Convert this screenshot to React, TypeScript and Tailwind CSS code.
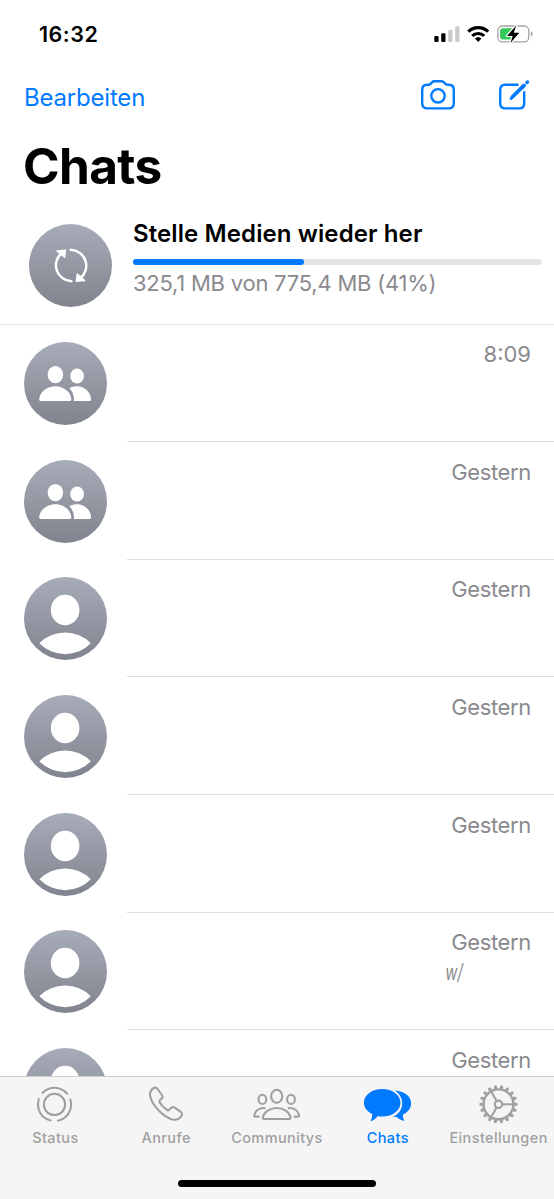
import React from 'react';

type ChatKind = 'group' | 'person';

type Chat = {
  id: number;
  kind: ChatKind;
  time: string;
  preview?: string;
};

const CHATS: Chat[] = [
  { id: 1, kind: 'group', time: '8:09' },
  { id: 2, kind: 'group', time: 'Gestern' },
  { id: 3, kind: 'person', time: 'Gestern' },
  { id: 4, kind: 'person', time: 'Gestern' },
  { id: 5, kind: 'person', time: 'Gestern' },
  { id: 6, kind: 'person', time: 'Gestern', preview: 'w/' },
  { id: 7, kind: 'person', time: 'Gestern' },
];

// --- Status bar ---

const StatusIcons: React.FC = () => (
  <svg width="104" height="28" viewBox="0 0 104 28" fill="none">
    <rect x="4.3" y="16" width="4.3" height="6" rx="1.2" fill="#000" />
    <rect x="11.2" y="13.2" width="4.3" height="8.8" rx="1.2" fill="#000" />
    <rect x="18.2" y="9.8" width="4.3" height="12.2" rx="1.2" fill="#cacaca" />
    <rect x="25.2" y="6.2" width="4.3" height="15.8" rx="1.2" fill="#cacaca" />
    <path d="M38.3 11.7a14.3 14.3 0 0 1 19.8 0" stroke="#000" strokeWidth="3.2" />
    <path d="M42.2 15.9a8.6 8.6 0 0 1 12 0" stroke="#000" strokeWidth="3" />
    <path d="M48.2 21.9l-3.3-3.4a4.8 4.8 0 0 1 6.6 0z" fill="#000" />
    <rect x="67.8" y="6" width="31" height="15.8" rx="4.6" stroke="#a2a2a2" strokeWidth="1.3" />
    <path d="M100.8 11.3c2.4.8 2.4 4.4 0 5.2z" fill="#a2a2a2" />
    <rect x="70.1" y="8.3" width="14" height="11.2" rx="2.4" fill="#34c759" />
    <path
      d="M86.3 5.6L77 15.9h5.7l-2.3 7L89.4 12.7h-5.7z"
      fill="#000"
      stroke="#fff"
      strokeWidth="2.4"
      strokeLinejoin="round"
      paintOrder="stroke"
    />
  </svg>
);

// --- Navigation icons ---

const CameraIcon: React.FC = () => (
  <svg width="46" height="40" viewBox="0 0 46 40" fill="none" stroke="#007aff" strokeWidth="2.4">
    <path d="M12.3 9.7h1.1c1.2 0 2-.5 2.7-1.3l.9-1c.7-.8 1.4-1.1 2.5-1.1h7c1.1 0 1.8.3 2.5 1.1l.9 1c.7.8 1.5 1.3 2.7 1.3h1.1c3.4 0 5.1 1.8 5.1 5.2v13.3c0 3.4-1.8 5.2-5.2 5.2H12.4c-3.4 0-5.2-1.8-5.2-5.2V14.9c0-3.4 1.7-5.2 5.1-5.2z" />
    <circle cx="23" cy="20.8" r="6.7" />
  </svg>
);

const ComposeIcon: React.FC = () => (
  <svg width="40" height="40" viewBox="0 0 40 40" fill="none" stroke="#007aff" strokeWidth="2.4">
    <path d="M23.5 9.8H10.1c-3.2 0-4.9 1.7-4.9 4.9v13.8c0 3.2 1.7 4.9 4.9 4.9h14.2c3.2 0 4.9-1.7 4.9-4.9V16.2" />
    <path d="M28.2 8.4l2.7 2.7-12.2 11.7-3.7 1.8 1.3-4z" fill="#007aff" stroke="none" />
    <path d="M16.2 23.3l13.3-12.9" strokeWidth="3.1" strokeLinecap="round" />
    <path d="M32 7.5l.5-.5" strokeWidth="3.5" strokeLinecap="round" />
  </svg>
);

// --- Avatars ---

const AVATAR = 'flex size-[83px] shrink-0 rounded-full bg-linear-to-b from-[#a7acb9] to-[#80848e]';

const SyncGlyph: React.FC = () => (
  <svg width="83" height="83" viewBox="-0.4 0 83 83" fill="none">
    <path d="M42 57.3A16 16 0 0 1 32.6 28.8" stroke="#fff" strokeWidth="2.5" strokeLinecap="round" />
    <path d="M41.3 25.7A16 16 0 0 1 50.6 54.4" stroke="#fff" strokeWidth="2.5" strokeLinecap="round" />
    <path d="M27.6 26.9l8.4-.8-.7 7.2z" fill="#fff" stroke="#fff" strokeWidth="1.4" strokeLinejoin="round" />
    <path d="M55.2 56.6l-8.3.7 1-7.3z" fill="#fff" stroke="#fff" strokeWidth="1.4" strokeLinejoin="round" />
  </svg>
);

const PersonGlyph: React.FC = () => (
  <svg width="83" height="83" viewBox="0.4 0 83 83" fill="#fff">
    <ellipse cx="41.5" cy="33" rx="14.3" ry="15.3" />
    <path d="M15.8 66.2a36.4 36.4 0 0 1 51.4 0a35.5 35.5 0 0 1-51.4 0z" />
  </svg>
);

const GroupGlyph: React.FC = () => (
  <svg width="83" height="83" viewBox="0.4 0 83 83" fill="#fff">
    <ellipse cx="31.8" cy="32.6" rx="7.8" ry="8.6" />
    <ellipse cx="53.5" cy="34" rx="6.9" ry="7.5" />
    <path d="M17.4 59c-1.3 0-1.9-.8-1.8-2.1C16.3 49.9 23.4 44.2 31.7 44.2S47 49.9 47.7 56.9c.1 1.3-.5 2.1-1.8 2.1z" />
    <path d="M45.9 45.9c2.2-1.1 4.8-1.7 7.6-1.7 7.3 0 13.3 5.6 14 12.7.1 1.3-.5 2.1-1.7 2.1H49.9c.5-.7.6-1.5.5-2.5-.3-4.1-1.9-7-4.5-10.6z" />
  </svg>
);

const ChatRow: React.FC<{ chat: Chat }> = ({ chat }) => (
  <div className="flex h-[117.65px] shrink-0 pl-[23.6px]">
    <div className="mt-[17.7px] h-[83px]">
      <div className={AVATAR}>{chat.kind === 'group' ? <GroupGlyph /> : <PersonGlyph />}</div>
    </div>
    <div className="ml-[20.4px] flex flex-1 flex-col items-end border-b border-[#dedede] pt-[14.7px] pr-[23px] text-[22px] leading-[30px] text-[#8a8a8e]">
      <span className={chat.time === 'Gestern' ? 'tracking-[-0.35px]' : ''}>{chat.time}</span>
      {chat.preview && (
        <span className="mr-[68px] origin-right scale-x-[0.68] italic">{chat.preview}</span>
      )}
    </div>
  </div>
);

// --- Tab bar ---

const StatusTabIcon: React.FC = () => (
  <svg width="60" height="48" viewBox="0 0 60 48" fill="none" stroke="currentColor" strokeWidth="2.1">
    <circle cx="29.5" cy="24.4" r="10.6" />
    <circle
      cx="29.5"
      cy="24.4"
      r="16.6"
      strokeDasharray="27.37 7.4"
      strokeLinecap="round"
      transform="rotate(-17.2 29.5 24.4)"
    />
  </svg>
);

const CallsTabIcon: React.FC = () => (
  <svg width="60" height="48" viewBox="0 0 60 48" fill="none" stroke="currentColor" strokeWidth="2.1">
    <path d="M15.7 9.7c2.1-2.4 4.4-2.8 5.9-.7l4.3 6c1 1.5.9 2.6-.4 3.8l-1.6 1.5c-.7.6-.8 1.3-.3 2.1 1.9 3.1 4.5 5.7 7.6 7.6.8.5 1.5.4 2.1-.3l1.5-1.6c1.2-1.3 2.3-1.4 3.8-.4l6.1 4.2c2.1 1.5 1.7 3.8-.7 5.9-4.2 4-12 1.8-20.2-6.2-8.6-8.5-12.1-17.4-8.1-21.9z" />
  </svg>
);

const CommunitiesTabIcon: React.FC = () => (
  <svg width="60" height="48" viewBox="0 0 60 48" fill="none" stroke="currentColor" strokeWidth="2.1">
    <ellipse cx="29.7" cy="16.3" rx="5.6" ry="6.5" />
    <ellipse cx="15.4" cy="19.4" rx="3.9" ry="4.6" />
    <ellipse cx="44" cy="19.4" rx="3.9" ry="4.6" />
    <path d="M17.5 39c-1.2 0-1.8-.7-1.6-1.9 1.1-5.2 7-9.1 13.8-9.1s12.7 3.9 13.8 9.1c.2 1.2-.4 1.9-1.6 1.9z" />
    <path d="M18.6 28.2c-6.2-.9-10 2.5-11.3 7-.2 1 .2 1.4 1 1.4h4.3" />
    <path d="M40.8 28.2c6.2-.9 10 2.5 11.3 7 .2 1-.2 1.4-1 1.4h-4.3" />
  </svg>
);

const ChatsTabIcon: React.FC = () => (
  <svg width="60" height="48" viewBox="0.4 0 60 48" fill="currentColor">
    <path d="M24.6 9C34.8 9 42.9 15 42.9 22.8S34.8 36.6 24.6 36.6c-1.6 0-3.1-.1-4.5-.5-1.7 2.3-3.7 4.1-6.4 5-.7.2-.9-.3-.5-.8 1.1-1.7 1.5-4 1.3-6.3C9.4 31.5 6.3 27.4 6.3 22.8 6.3 15 14.4 9 24.6 9z" />
    <path d="M37.2 10.6C46.8 11.1 53.5 16.3 53.5 23.2c0 5-3.2 9.1-8.2 11.3-.2 2 .2 3.9 1.2 5.4.4.6.1 1-.5.8-3-.7-5.3-2-7.2-4-1.2.3-2.3.4-3.5.4 6.1-3.1 9.5-8.2 9.3-14.3-.2-5-3.1-9.4-7.4-12.2z" />
  </svg>
);

const GEAR_TEETH = Array.from({ length: 18 }, (_, i) => i * 20);

const SettingsTabIcon: React.FC = () => (
  <svg width="60" height="48" viewBox="0 0 60 48" fill="none" stroke="currentColor" strokeWidth="2.1">
    <g transform="translate(29.5 24.3)">
      <circle r="14.9" strokeWidth="2.4" />
      <circle r="3.7" />
      {[0, 120, 240].map((a) => (
        <path key={a} d="M4 0H15" transform={`rotate(${a})`} />
      ))}
      {GEAR_TEETH.map((a) => (
        <path key={a} d="M15.7 -2L19.1 -1.1V1.1L15.7 2z" fill="currentColor" stroke="none" transform={`rotate(${a})`} />
      ))}
    </g>
  </svg>
);

type Tab = { id: string; label: string; icon: React.ReactNode };

const TABS: Tab[] = [
  { id: 'status', label: 'Status', icon: <StatusTabIcon /> },
  { id: 'calls', label: 'Anrufe', icon: <CallsTabIcon /> },
  { id: 'communities', label: 'Communitys', icon: <CommunitiesTabIcon /> },
  { id: 'chats', label: 'Chats', icon: <ChatsTabIcon /> },
  { id: 'settings', label: 'Einstellungen', icon: <SettingsTabIcon /> },
];

const TabBar: React.FC<{ active: string }> = ({ active }) => (
  <nav className="flex h-[123px] shrink-0 flex-col items-center border-t border-[#cfcfcf] bg-[#f5f5f5]">
    <div className="grid w-full grid-cols-5">
      {TABS.map((tab) => (
        <button
          key={tab.id}
          className={`flex flex-col items-center pt-[3px] font-medium ${
            tab.id === active ? 'text-[#007aff]' : 'text-[#a0a0a0]'
          }`}
        >
          {tab.icon}
          <span className="text-[14.5px] leading-5 tracking-[0.4px] whitespace-nowrap">{tab.label}</span>
        </button>
      ))}
    </div>
    <div className="mt-auto mb-[12px] h-[7.5px] w-[198px] rounded-full bg-black" />
  </nav>
);

export default function App() {
  return (
    <div className="flex h-[1199px] w-[554px] flex-col overflow-hidden bg-white font-['Inter',sans-serif] text-black">
      {/* Status bar */}
      <div className="flex h-[68px] shrink-0 items-center justify-between pr-5 pl-[39px]">
        <span className="pt-px text-[21.5px] font-semibold tracking-[0.5px]">16:32</span>
        <StatusIcons />
      </div>

      {/* Navigation */}
      <div className="flex h-[60px] shrink-0 items-center justify-between pr-[19px] pl-6 text-[#007aff]">
        <button className="text-[24px] tracking-[-0.2px]">Bearbeiten</button>
        <div className="flex gap-[34px] pb-[6px]">
          <CameraIcon />
          <ComposeIcon />
        </div>
      </div>
      <h1 className="h-[76px] shrink-0 pl-[23px] text-[49.5px] leading-[77px] font-bold tracking-[-0.6px]">Chats</h1>

      {/* Media restore progress */}
      <div className="flex h-[121px] shrink-0 border-b border-[#e2e2e2] pt-[14px] pr-3 pl-[29.4px]">
        <div className="mt-[6px] h-[83px]">
          <div className={AVATAR}>
            <SyncGlyph />
          </div>
        </div>
        <div className="ml-[20.6px] flex flex-1 flex-col">
          <span className="text-[24px] leading-8 font-semibold tracking-[0.1px]">Stelle Medien wieder her</span>
          <div className="mt-[9px] h-[6px] rounded-full bg-[#e4e4e6]">
            <div className="h-full w-[171px] rounded-full bg-[#007aff]" />
          </div>
          <span className="mt-[3px] text-[22px] leading-[30px] tracking-[-0.23px] text-[#8a8a8e]">
            325,1 MB von 775,4 MB (41%)
          </span>
        </div>
      </div>

      {/* Chat list */}
      <div className="-mt-[0.7px] min-h-0 flex-1 overflow-hidden">
        {CHATS.map((chat) => (
          <ChatRow key={chat.id} chat={chat} />
        ))}
      </div>

      <TabBar active="chats" />
    </div>
  );
}
